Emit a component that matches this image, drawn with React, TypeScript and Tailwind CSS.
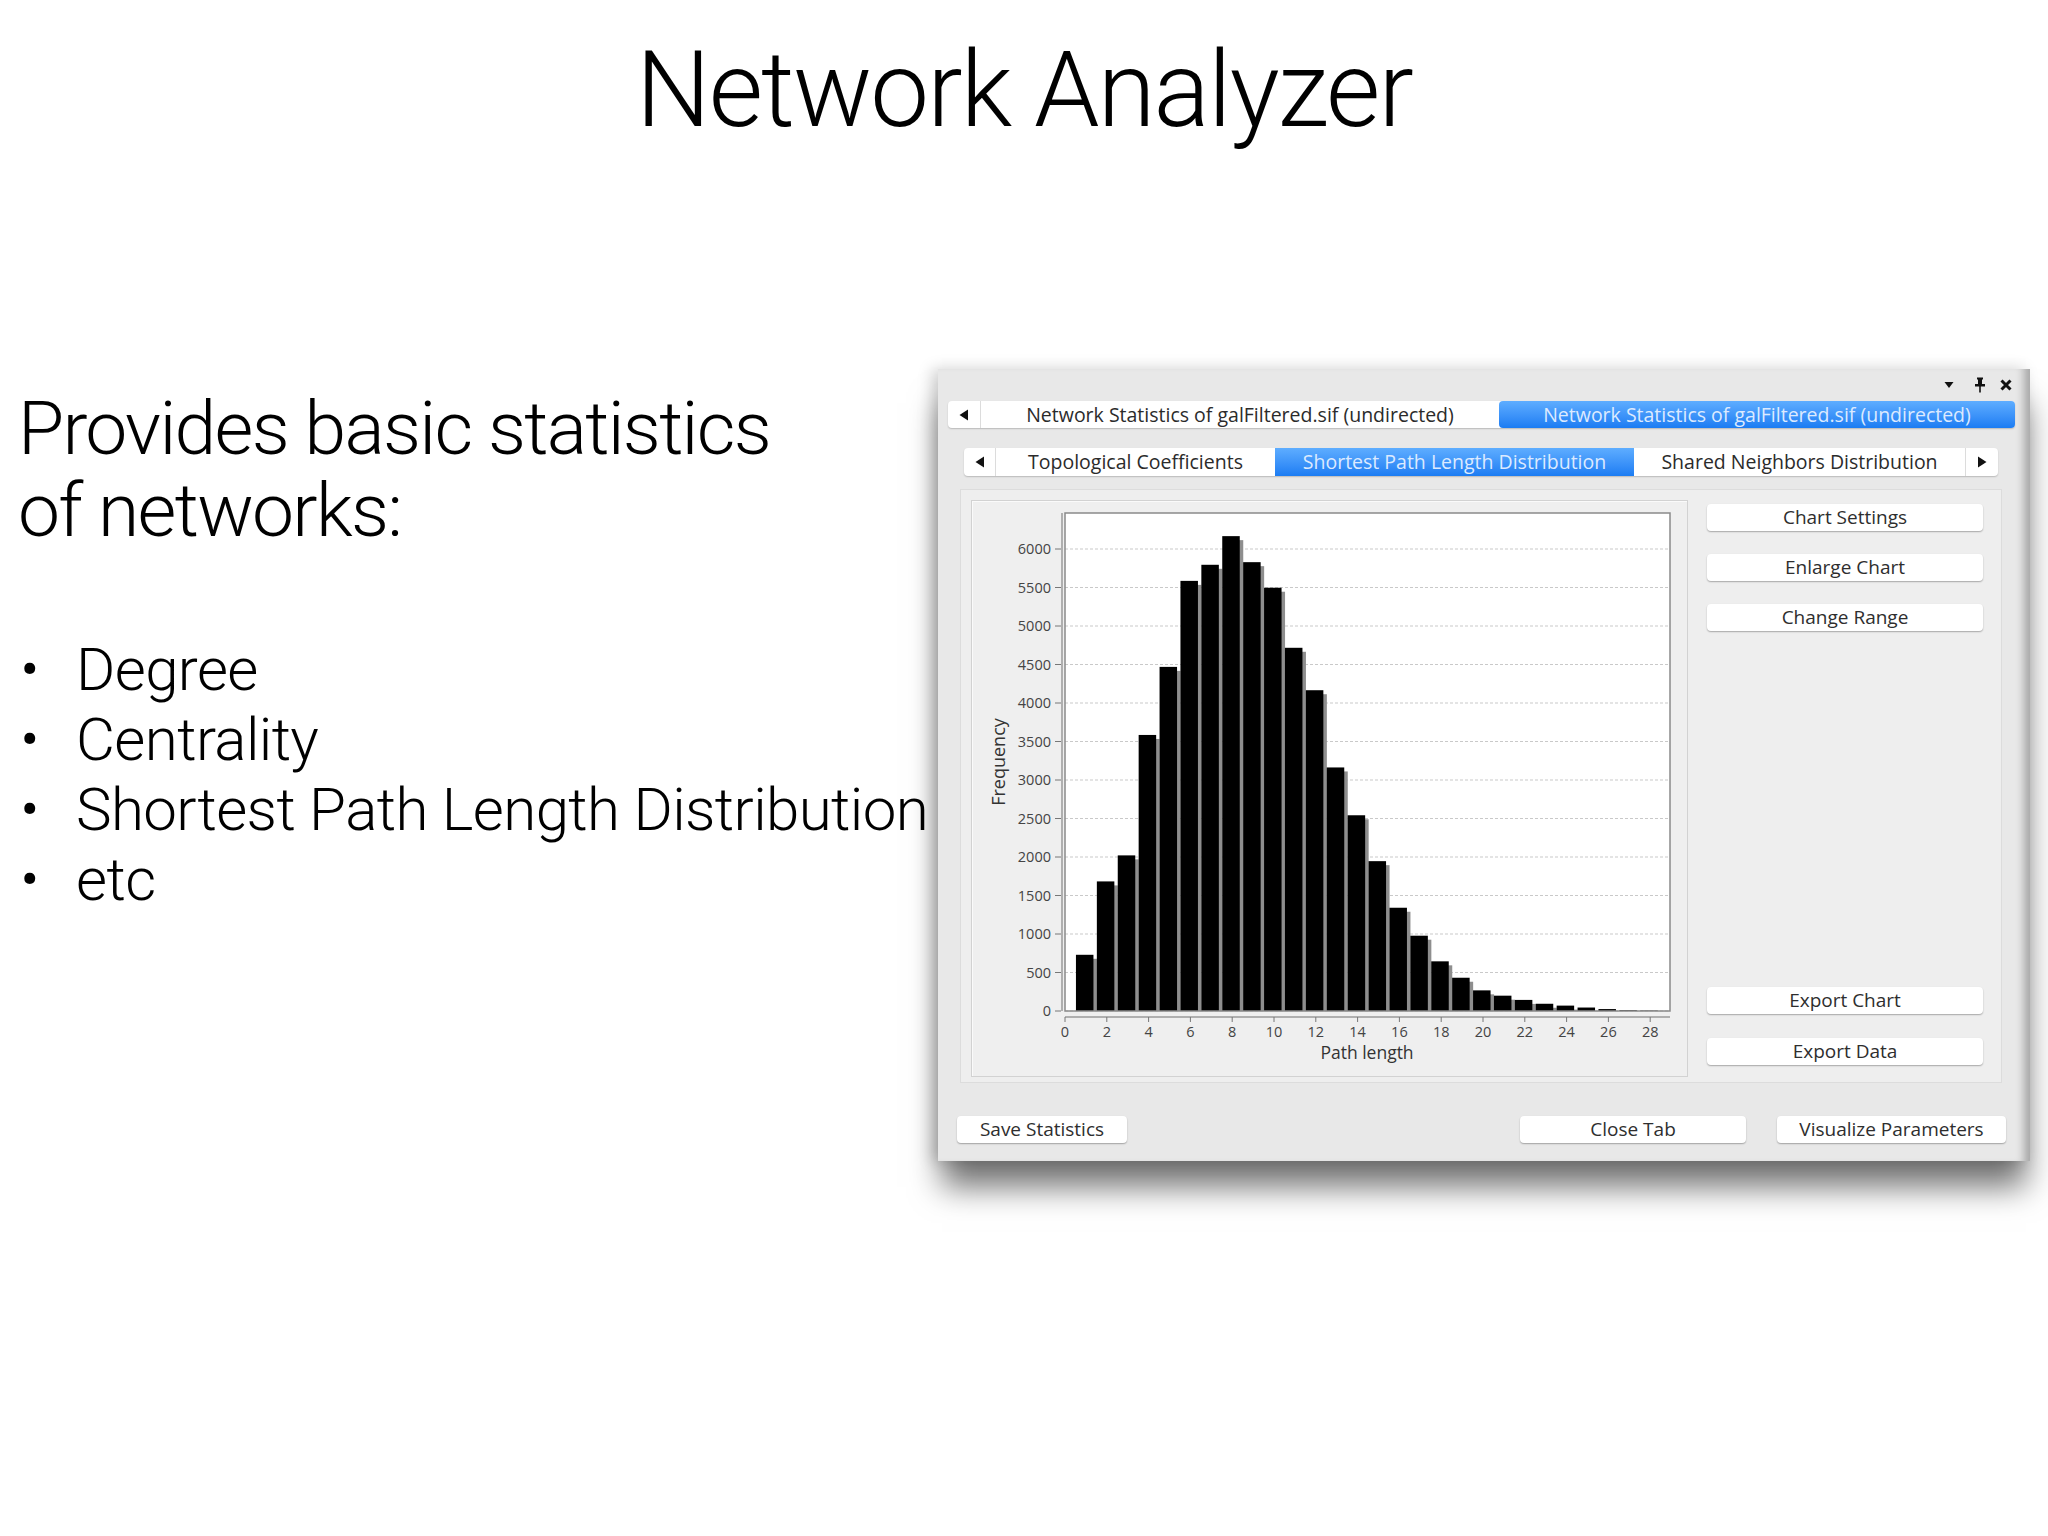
import React from 'react'

const bars = [730, 1683, 2021, 3585, 4469, 5586, 5795, 6167, 5829, 5497, 4717, 4166, 3163, 2542, 1946, 1341, 978, 645, 432, 268, 199, 144, 94, 70, 45, 25, 10, 5]

const X0 = 93
const X1 = 698
const YTOP = 12
const Y0 = 510
const XS = 20.9
const YS = 0.077

const px = (v: number) => X0 + v * XS
const py = (v: number) => Y0 - v * YS

const LeftArrow = () => (
  <svg width="10" height="12" viewBox="0 0 10 12">
    <path d="M9 0.5 L0.5 6 L9 11.5 Z" fill="#111" />
  </svg>
)

const RightArrow = () => (
  <svg width="10" height="12" viewBox="0 0 10 12">
    <path d="M1 0.5 L9.5 6 L1 11.5 Z" fill="#111" />
  </svg>
)

const Button = ({ label, className = '' }: { label: string; className?: string }) => (
  <div
    className={`h-[27px] flex items-center justify-center bg-white rounded-[4px] shadow-[0_1px_1.5px_rgba(0,0,0,0.3)] text-[19px] text-[#2e2e2e] ${className}`}
  >
    {label}
  </div>
)

const Chart = () => {
  const yTicks = Array.from({ length: 13 }, (_, i) => i * 500)
  const xTicks = Array.from({ length: 15 }, (_, i) => i * 2)
  return (
    <svg width="715" height="575" viewBox="0 0 715 575" style={{ fontFamily: '"Open Sans", "DejaVu Sans", sans-serif' }}>
      <rect x={X0} y={YTOP} width={X1 - X0} height={Y0 - YTOP} fill="#fff" />
      {yTicks.map((t) => (
        <line key={t} x1={X0} x2={X1} y1={py(t)} y2={py(t)} stroke="#c9c9c9" strokeWidth="1" strokeDasharray="3 2" />
      ))}
      {bars.map((v, i) => {
        const a = px(i + 0.5)
        const top = py(v)
        return <rect key={i} x={a + 3.5} y={top + 4} width={18} height={Y0 - top - 4} fill="#8e8e8e" />
      })}
      {bars.map((v, i) => {
        const a = px(i + 0.5)
        const top = py(v)
        return <rect key={i} x={a + 0.5} y={top} width={17.5} height={Y0 - top} fill="#000" />
      })}
      <rect x={X0} y={YTOP} width={X1 - X0} height={Y0 - YTOP} fill="none" stroke="#8a8a8a" strokeWidth="1.5" />
      <line x1={90} x2={90} y1={YTOP} y2={Y0} stroke="#9a9a9a" strokeWidth="1.5" />
      {yTicks.map((t) => (
        <g key={t}>
          <line x1={83} x2={89} y1={py(t)} y2={py(t)} stroke="#777" strokeWidth="1" />
          <text x={79} y={py(t) + 5} textAnchor="end" fontSize="14.5" fill="#444">
            {t}
          </text>
        </g>
      ))}
      <line x1={X0} x2={X1} y1={516} y2={516} stroke="#9a9a9a" strokeWidth="1.5" />
      {xTicks.map((t) => (
        <g key={t}>
          <line x1={px(t)} x2={px(t)} y1={516} y2={521} stroke="#777" strokeWidth="1" />
          <text x={px(t)} y={536} textAnchor="middle" fontSize="14.5" fill="#444">
            {t}
          </text>
        </g>
      ))}
      <text x={395} y={558} textAnchor="middle" fontSize="17.5" fill="#333">
        Path length
      </text>
      <text x={33} y={261} textAnchor="middle" fontSize="18" fill="#333" transform="rotate(-90 33 261)">
        Frequency
      </text>
    </svg>
  )
}

const AnalyzerWindow = () => (
  <div
    className="relative z-10 w-[1092px] h-[792px] bg-[#e8e8e8] shadow-[inset_-12px_0_8px_-6px_rgba(0,0,0,0.28),0_30px_30px_-4px_rgba(0,0,0,0.55),-6px_0_14px_rgba(0,0,0,0.18)]"
    style={{ fontFamily: '"Open Sans", "DejaVu Sans", sans-serif' }}
  >
    {/* title bar */}
    <div className="h-[32px] flex items-center justify-end gap-[20px] pr-[18px]">
      <svg width="10" height="8" viewBox="0 0 10 8">
        <path d="M0.5 1 L9.5 1 L5 7 Z" fill="#111" />
      </svg>
      <div className="flex items-center gap-[14px]">
        <svg width="12" height="16" viewBox="0 0 12 16">
          <rect x="3" y="0.5" width="6" height="2" fill="#111" />
          <rect x="4" y="2" width="4" height="5" fill="#111" />
          <rect x="1" y="7" width="10" height="2.5" fill="#111" />
          <rect x="5.2" y="9" width="1.6" height="6.5" fill="#111" />
        </svg>
        <svg width="12" height="12" viewBox="0 0 12 12">
          <path d="M1.5 1.5 L10.5 10.5 M10.5 1.5 L1.5 10.5" stroke="#111" strokeWidth="3" />
        </svg>
      </div>
    </div>

    {/* document tabs */}
    <div className="ml-[10px] w-[1067px] h-[27px] flex bg-white rounded-[4px] shadow-[0_1px_1.5px_rgba(0,0,0,0.2)] text-[19.5px]">
      <div className="w-[33px] flex items-center justify-center border-r border-[#dcdcdc]">
        <LeftArrow />
      </div>
      <div className="w-[518px] flex items-center justify-center text-[#2b2b2b]">
        Network Statistics of galFiltered.sif (undirected)
      </div>
      <div className="flex-1 flex items-center justify-center rounded-[4px] bg-gradient-to-b from-[#5eadff] to-[#1a7cf3] text-[#dceaff]">
        Network Statistics of galFiltered.sif (undirected)
      </div>
    </div>

    {/* statistic tabs */}
    <div className="mt-[20px] ml-[26px] w-[1034px] h-[28px] flex bg-white rounded-[4px] shadow-[0_1px_1.5px_rgba(0,0,0,0.2)] text-[19.5px] text-[#2b2b2b]">
      <div className="w-[32px] flex items-center justify-center border-r border-[#dcdcdc]">
        <LeftArrow />
      </div>
      <div className="w-[279px] flex items-center justify-center">Topological Coefficients</div>
      <div className="w-[359px] flex items-center justify-center bg-gradient-to-b from-[#5eadff] to-[#1a7cf3] text-[#dceaff]">
        Shortest Path Length Distribution
      </div>
      <div className="w-[331px] flex items-center justify-center">Shared Neighbors Distribution</div>
      <div className="flex-1 flex items-center justify-center border-l border-[#dcdcdc]">
        <RightArrow />
      </div>
    </div>

    {/* content */}
    <div className="mt-[13px] ml-[22px] w-[1042px] h-[594px] flex p-[10px] bg-[#eeeeee] border border-[#dcdcdc]">
      <div className="w-[717px] h-[577px] border border-[#d2d2d2] bg-[#efefef] shadow-[inset_1px_1px_0_#fafafa]">
        <Chart />
      </div>
      <div className="ml-[19px] w-[276px] pt-[4px] pb-[7px] flex flex-col justify-between">
        <div className="flex flex-col gap-[23px]">
          <Button label="Chart Settings" />
          <Button label="Enlarge Chart" />
          <Button label="Change Range" />
        </div>
        <div className="flex flex-col gap-[24px]">
          <Button label="Export Chart" />
          <Button label="Export Data" />
        </div>
      </div>
    </div>

    {/* bottom buttons */}
    <div className="mt-[33px] flex items-center">
      <Button label="Save Statistics" className="ml-[19px] w-[170px]" />
      <Button label="Close Tab" className="ml-[393px] w-[226px]" />
      <Button label="Visualize Parameters" className="ml-[31px] w-[229px]" />
    </div>
  </div>
)

const items = ['Degree', 'Centrality', 'Shortest Path Length Distribution', 'etc']

export default function App() {
  return (
    <div
      className="w-[2048px] h-[1536px] bg-white overflow-hidden text-black"
      style={{ fontFamily: 'Roboto, "Liberation Sans", sans-serif' }}
    >
      <h1 className="pt-[38px] text-center text-[105px] leading-none font-light tracking-[-1.9px]">Network Analyzer</h1>
      <div className="flex items-start">
        <div className="w-[938px] shrink-0 pl-[18px] pt-[244px] font-light whitespace-nowrap">
          <p className="text-[75px] leading-[82px] tracking-[-1.7px]">
            Provides basic statistics
            <br />
            of networks:
          </p>
          <ul className="mt-[84px] text-[60px] leading-[70px] tracking-[-0.6px]">
            {items.map((it) => (
              <li key={it} className="flex">
                <span className="w-[58px] shrink-0 pl-[2px]">•</span>
                <span>{it}</span>
              </li>
            ))}
          </ul>
        </div>
        <div className="mt-[226px]">
          <AnalyzerWindow />
        </div>
      </div>
    </div>
  )
}
